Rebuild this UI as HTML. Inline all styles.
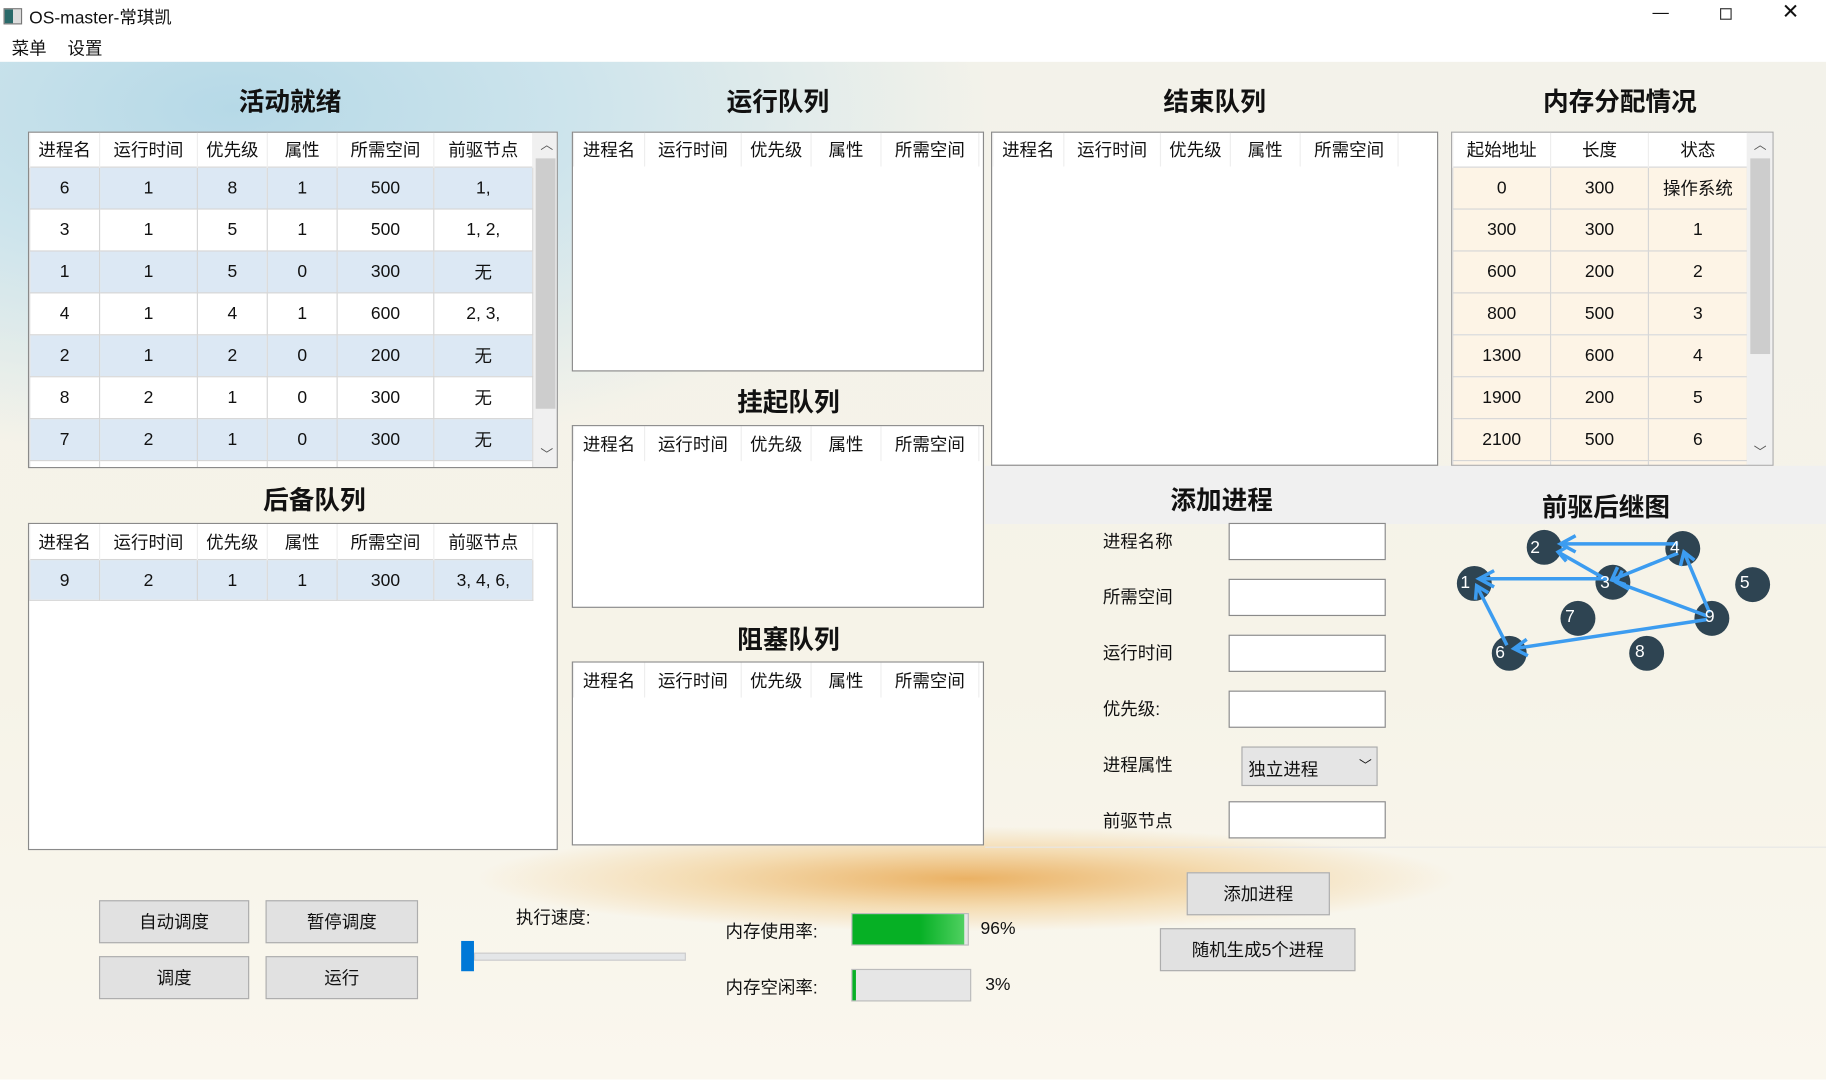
<!DOCTYPE html>
<html><head><meta charset="utf-8"><style>
body{margin:0;width:1826px;height:1080px;overflow:hidden;background:#fff;font-family:"Liberation Sans","Microsoft YaHei","Noto Sans CJK SC",sans-serif;}
#w{position:absolute;left:0;top:0;width:1568px;height:927px;transform:scale(1.16454);transform-origin:0 0;font-size:15px;color:#111;}
.a{position:absolute;}
.h{position:absolute;font-weight:bold;font-size:22px;transform:translateX(-50%);white-space:nowrap;top:70px;}
table{border-collapse:collapse;table-layout:fixed;}
td,th{font-weight:normal;text-align:center;padding:0;border:1px solid #d6d6d6;white-space:nowrap;overflow:hidden;}
th{height:29px;background:#fff;border-top:none;border-bottom:none;border-color:#eee;}
.box{position:absolute;background:#fff;border:1px solid #8a8a8a;overflow:hidden;box-sizing:border-box;}
tr.b td{background:#dce8f4;}tr.w td{background:#fff;}
.mem td{background:#fdf4e6;}
.btn{position:absolute;background:#e1e1e1;border:1px solid #adadad;box-sizing:border-box;display:flex;align-items:center;justify-content:center;}
.inp{position:absolute;background:#fff;border:1px solid #8a8a8a;box-sizing:border-box;width:135px;height:32px;left:1055px;}
.lb{position:absolute;left:947px;}
.sb{position:absolute;background:#f0f0f0;}
</style></head><body><div id="w">
<div class="a" style="left:0;top:53px;width:1568px;height:874px;background:linear-gradient(180deg,#f3f2ea 0%,#f6f3e8 60%,#faf7ee 100%);"></div>
<div class="a" style="left:0;top:53px;width:1000px;height:420px;background:radial-gradient(ellipse 650px 300px at 200px 40px,#b6d9e7 0%,#cde4ec 45%,rgba(240,243,236,0) 100%);"></div>
<div class="a" style="left:350px;top:705px;width:1000px;height:110px;background:radial-gradient(ellipse 420px 45px at 48% 45%,rgba(230,155,55,.75) 0%,rgba(240,190,110,.45) 55%,rgba(248,240,225,0) 100%);"></div>
<div class="a" style="left:846px;top:400px;width:722px;height:50px;background:#f0f0f0;"></div>
<div class="a" style="left:0;top:0;width:1568px;height:27px;background:#fff;"></div>
<div class="a" style="left:3px;top:7px;width:14px;height:12px;border:1px solid #777;background:linear-gradient(90deg,#2a6a6a 50%,#ddd 50%);"></div>
<div class="a" style="left:25px;top:4px;font-size:15px;">OS-master-常琪凯</div>
<div class="a" style="left:1419px;top:2px;font-size:14px;">—</div>
<div class="a" style="left:1477px;top:7px;width:8px;height:8px;border:1px solid #333;"></div>
<div class="a" style="left:1530px;top:0px;font-size:18px;">✕</div>
<div class="a" style="left:0;top:27px;width:1568px;height:26px;background:#fff;"></div>
<div class="a" style="left:10px;top:31px;">菜单</div><div class="a" style="left:58px;top:31px;">设置</div>
<div class="h" style="left:249px;">活动就绪</div>
<div class="h" style="left:668px;">运行队列</div>
<div class="h" style="left:1043px;">结束队列</div>
<div class="h" style="left:1391px;">内存分配情况</div>
<div class="h" style="left:270px;top:412px;">后备队列</div>
<div class="h" style="left:677px;top:328px;">挂起队列</div>
<div class="h" style="left:677px;top:532px;">阻塞队列</div>
<div class="h" style="left:1049px;top:412px;">添加进程</div>
<div class="h" style="left:1379px;top:418px;">前驱后继图</div>
<div class="box" style="left:24px;top:113px;width:455px;height:289px;">
<table style="width:432px;"><colgroup><col style="width:60px"><col style="width:84px"><col style="width:60px"><col style="width:60px"><col style="width:83px"><col style="width:85px"></colgroup>
<tr><th>进程名</th><th>运行时间</th><th>优先级</th><th>属性</th><th>所需空间</th><th>前驱节点</th></tr>
<tr class="b" style="height:36px"><td>6</td><td>1</td><td>8</td><td>1</td><td>500</td><td>1,</td></tr>
<tr class="w" style="height:36px"><td>3</td><td>1</td><td>5</td><td>1</td><td>500</td><td>1, 2,</td></tr>
<tr class="b" style="height:36px"><td>1</td><td>1</td><td>5</td><td>0</td><td>300</td><td>无</td></tr>
<tr class="w" style="height:36px"><td>4</td><td>1</td><td>4</td><td>1</td><td>600</td><td>2, 3,</td></tr>
<tr class="b" style="height:36px"><td>2</td><td>1</td><td>2</td><td>0</td><td>200</td><td>无</td></tr>
<tr class="w" style="height:36px"><td>8</td><td>2</td><td>1</td><td>0</td><td>300</td><td>无</td></tr>
<tr class="b" style="height:36px"><td>7</td><td>2</td><td>1</td><td>0</td><td>300</td><td>无</td></tr>
<tr class="w" style="height:36px"><td></td><td></td><td></td><td></td><td></td><td></td></tr>
</table>
<div class="sb" style="left:433px;top:0;width:21px;height:289px;"><div class="a" style="left:2px;top:22px;width:17px;height:215px;background:#cdcdcd;"></div><div class="a" style="left:6px;top:2px;font-size:11px;color:#555;">︿</div><div class="a" style="left:6px;top:268px;font-size:11px;color:#555;">﹀</div></div>
</div>
<div class="box" style="left:24px;top:449px;width:455px;height:281px;">
<table style="width:432px;"><colgroup><col style="width:60px"><col style="width:84px"><col style="width:60px"><col style="width:60px"><col style="width:83px"><col style="width:85px"></colgroup>
<tr><th style="height:30px">进程名</th><th>运行时间</th><th>优先级</th><th>属性</th><th>所需空间</th><th>前驱节点</th></tr>
<tr class="b" style="height:35px"><td>9</td><td>2</td><td>1</td><td>1</td><td>300</td><td>3, 4, 6,</td></tr>
</table></div>
<div class="box" style="left:491px;top:113px;width:354px;height:206px;"><table style="width:348px"><colgroup><col style="width:61px"><col style="width:83px"><col style="width:60px"><col style="width:60px"><col style="width:84px"></colgroup><tr><th>进程名</th><th>运行时间</th><th>优先级</th><th>属性</th><th>所需空间</th></tr></table></div>
<div class="box" style="left:491px;top:365px;width:354px;height:157px;"><table style="width:348px"><colgroup><col style="width:61px"><col style="width:83px"><col style="width:60px"><col style="width:60px"><col style="width:84px"></colgroup><tr><th style="height:30px">进程名</th><th>运行时间</th><th>优先级</th><th>属性</th><th>所需空间</th></tr></table></div>
<div class="box" style="left:491px;top:568px;width:354px;height:158px;"><table style="width:348px"><colgroup><col style="width:61px"><col style="width:83px"><col style="width:60px"><col style="width:60px"><col style="width:84px"></colgroup><tr><th style="height:30px">进程名</th><th>运行时间</th><th>优先级</th><th>属性</th><th>所需空间</th></tr></table></div>
<div class="box" style="left:851px;top:113px;width:384px;height:287px;"><table style="width:348px"><colgroup><col style="width:61px"><col style="width:83px"><col style="width:60px"><col style="width:60px"><col style="width:84px"></colgroup><tr><th>进程名</th><th>运行时间</th><th>优先级</th><th>属性</th><th>所需空间</th></tr></table></div>
<div class="box" style="left:1246px;top:113px;width:277px;height:287px;border-color:#aaa;">
<table class="mem" style="width:253px"><colgroup><col style="width:84px"><col style="width:84px"><col style="width:85px"></colgroup>
<tr><th>起始地址</th><th>长度</th><th>状态</th></tr>
<tr style="height:36px"><td>0</td><td>300</td><td>操作系统</td></tr>
<tr style="height:36px"><td>300</td><td>300</td><td>1</td></tr>
<tr style="height:36px"><td>600</td><td>200</td><td>2</td></tr>
<tr style="height:36px"><td>800</td><td>500</td><td>3</td></tr>
<tr style="height:36px"><td>1300</td><td>600</td><td>4</td></tr>
<tr style="height:36px"><td>1900</td><td>200</td><td>5</td></tr>
<tr style="height:36px"><td>2100</td><td>500</td><td>6</td></tr>
<tr style="height:36px"><td></td><td></td><td></td></tr></table>
<div class="sb" style="left:253px;top:0;width:22px;height:287px;"><div class="a" style="left:3px;top:22px;width:17px;height:168px;background:#cdcdcd;"></div><div class="a" style="left:6px;top:2px;font-size:11px;color:#555;">︿</div><div class="a" style="left:6px;top:266px;font-size:11px;color:#555;">﹀</div></div>
</div>
<div class="lb" style="top:454px">进程名称</div><div class="inp" style="top:449px"></div>
<div class="lb" style="top:502px">所需空间</div><div class="inp" style="top:497px"></div>
<div class="lb" style="top:550px">运行时间</div><div class="inp" style="top:545px"></div>
<div class="lb" style="top:598px">优先级:</div><div class="inp" style="top:593px"></div>
<div class="lb" style="top:646px">进程属性</div>
<div class="a" style="left:1066px;top:641px;width:117px;height:34px;background:#e5e5e5;border:1px solid #acacac;box-sizing:border-box;"><span class="a" style="left:5px;top:8px;">独立进程</span><span class="a" style="left:100px;top:7px;font-size:11px;">﹀</span></div>
<div class="lb" style="top:694px">前驱节点</div><div class="inp" style="top:688px"></div>
<div class="a" style="left:846px;top:727px;width:722px;height:1px;background:#e6e6e6;"></div>
<svg class="a" style="left:1240px;top:450px;" width="300" height="130" viewBox="1240 450 300 130">
<g fill="#2e4452"><circle cx="1326" cy="470" r="15"/><circle cx="1445" cy="471" r="15"/><circle cx="1266" cy="501" r="15"/><circle cx="1385" cy="500" r="15"/><circle cx="1505" cy="502" r="15"/><circle cx="1355" cy="531" r="15"/><circle cx="1470" cy="531" r="15"/><circle cx="1296" cy="561" r="15"/><circle cx="1414" cy="561" r="15"/></g>
<g stroke="#3c9cf0" stroke-width="3" fill="none">
<line x1="1441" y1="467" x2="1340" y2="467"/><polyline points="1353,460 1340,467 1353,474"/>
<line x1="1380" y1="498" x2="1338" y2="474"/><polyline points="1345,470 1338,474 1345,482"/>
<line x1="1441" y1="475" x2="1384" y2="498"/><polyline points="1389,487 1384,498 1396,502"/>
<line x1="1380" y1="497" x2="1270" y2="497"/><polyline points="1283,490 1270,497 1283,504"/>
<line x1="1466" y1="529" x2="1388" y2="500"/><polyline points="1393,490 1388,500 1399,506"/>
<line x1="1468" y1="526" x2="1446" y2="474"/><polyline points="1443,486 1446,474 1455,481"/>
<line x1="1466" y1="532" x2="1300" y2="557"/><polyline points="1311,549 1300,557 1312,563"/>
<line x1="1294" y1="554" x2="1268" y2="503"/><polyline points="1267,515 1268,503 1278,509"/>
</g>
<g fill="#fff" font-size="15" font-family="Liberation Sans,sans-serif"><text x="1314" y="475">2</text><text x="1434" y="475">4</text><text x="1254" y="505">1</text><text x="1374" y="505">3</text><text x="1494" y="505">5</text><text x="1344" y="534">7</text><text x="1464" y="534">9</text><text x="1284" y="565">6</text><text x="1404" y="564">8</text></g>
</svg>
<div class="btn" style="left:85px;top:773px;width:129px;height:37px;">自动调度</div>
<div class="btn" style="left:228px;top:773px;width:131px;height:37px;">暂停调度</div>
<div class="btn" style="left:85px;top:821px;width:129px;height:37px;">调度</div>
<div class="btn" style="left:228px;top:821px;width:131px;height:37px;">运行</div>
<div class="a" style="left:443px;top:777px;">执行速度:</div>
<div class="a" style="left:407px;top:818px;width:180px;height:5px;background:#e4e6e8;border:1px solid #ccc;"></div>
<div class="a" style="left:396px;top:808px;width:11px;height:26px;background:#0078d7;"></div>
<div class="a" style="left:623px;top:789px;">内存使用率:</div>
<div class="a" style="left:731px;top:784px;width:101px;height:28px;background:#e6e6e6;border:1px solid #bcbcbc;box-sizing:border-box;"><div style="width:96px;height:26px;background:linear-gradient(90deg,#06b025 60%,#4fd060);"></div></div>
<div class="a" style="left:842px;top:789px;">96%</div>
<div class="a" style="left:623px;top:837px;">内存空闲率:</div>
<div class="a" style="left:731px;top:832px;width:103px;height:28px;background:#e6e6e6;border:1px solid #bcbcbc;box-sizing:border-box;"><div style="width:3px;height:26px;background:#06b025;"></div></div>
<div class="a" style="left:846px;top:837px;">3%</div>
<div class="btn" style="left:1019px;top:749px;width:123px;height:37px;">添加进程</div>
<div class="btn" style="left:996px;top:797px;width:168px;height:37px;">随机生成5个进程</div>
</div></body></html>
